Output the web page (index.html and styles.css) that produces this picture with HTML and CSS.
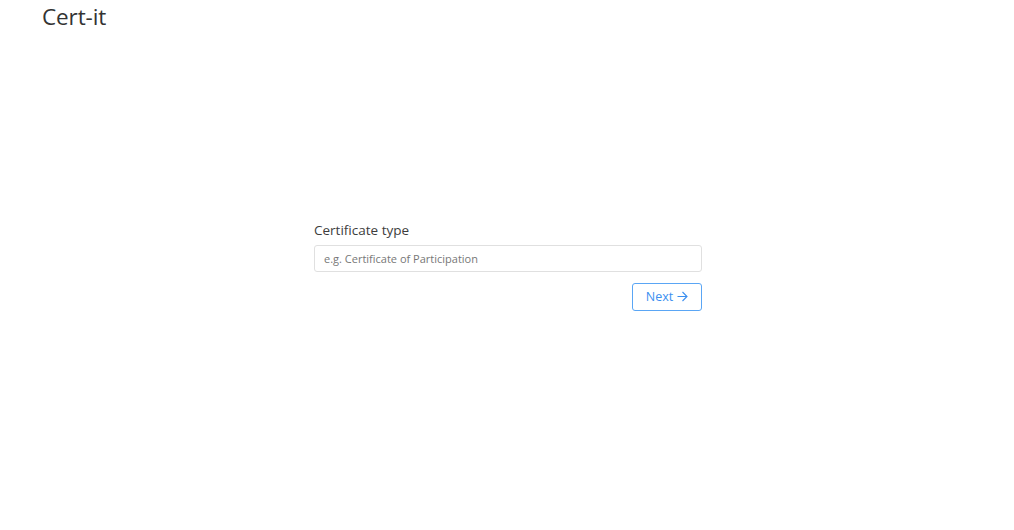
FILE: index.html
```html
<!DOCTYPE html>
<html>
<head>
<meta charset="utf-8">
<link rel="stylesheet" href="styles.css">
</head>
<body>
<header class="top">
  <h1 class="brand">Cert-it</h1>
</header>
<main class="stage">
  <form class="form">
    <label class="label" for="ctype">Certificate type</label>
    <input class="input" id="ctype" type="text" placeholder="e.g. Certificate of Participation">
    <div class="actions">
      <button class="btn" type="button">Next<svg class="arrow" width="11" height="11" viewBox="0 0 11 11" fill="none" stroke="currentColor" stroke-width="1.1"><path d="M0.5 5.5H10M5.5 1L10 5.5L5.5 10"/></svg></button>
    </div>
  </form>
</main>
</body>
</html>
```
FILE: styles.css
```css
html, body {
  margin: 0;
  padding: 0;
  height: 100%;
  background: #fff;
  font-family: "Open Sans", "Noto Sans", sans-serif;
  color: #333;
}
.top {
  position: absolute;
  top: 0;
  left: 0;
  padding: 3px 0 0 42px;
}
.brand {
  margin: 0;
  font-weight: 400;
  font-size: 22.5px;
  line-height: 28px;
  color: #333;
  letter-spacing: -0.1px;
}
.stage {
  height: 100%;
  display: flex;
  align-items: center;
  justify-content: center;
}
.form {
  width: 388px;
  display: flex;
  flex-direction: column;
  margin-top: 1px;
  margin-left: 2px;
}
.label {
  font-size: 13.5px;
  line-height: 18px;
  color: #3d3d3d;
  margin-bottom: 6px;
}
.input {
  box-sizing: border-box;
  height: 27px;
  border: 1px solid #e0e0e0;
  border-radius: 3px;
  padding: 0 9px;
  font-family: inherit;
  font-size: 11px;
  color: #333;
  outline: none;
}
.input::placeholder {
  color: #777;
}
.actions {
  display: flex;
  justify-content: flex-end;
  margin-top: 11px;
}
.btn {
  box-sizing: border-box;
  width: 70px;
  height: 28px;
  background: #fff;
  border: 1px solid #5aa6f5;
  border-radius: 3px;
  color: #3b8ff0;
  font-family: inherit;
  font-size: 12.5px;
  padding: 0;
  cursor: pointer;
  display: flex;
  align-items: center;
  justify-content: center;
  gap: 4px;
}
.arrow {
  display: block;
}
```
